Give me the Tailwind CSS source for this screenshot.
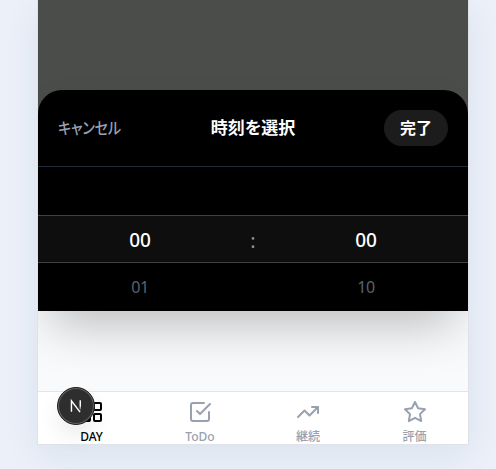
<!DOCTYPE html>
<html lang="ja">
<head>
<meta charset="utf-8">
<title>時刻を選択</title>
<script src="https://cdn.jsdelivr.net/npm/@tailwindcss/browser@4"></script>
</head>
<body class="h-[469px] overflow-hidden bg-[#ebf0f9] font-['Noto_Sans','Noto_Sans_CJK_JP',sans-serif]">
<div class="relative mx-auto ml-[37px] flex h-[445px] w-[432px] flex-col border-x border-b border-[#dfe3e8] bg-[#f9fafb] shadow-[0_10px_35px_rgba(30,50,90,0.07)]">
  <main class="relative h-[391px] shrink-0 overflow-hidden">
    <div class="h-[90px] bg-[#4b4d4b]"></div>
    <div class="h-[30px] bg-[#4b4d4b]"></div>
    <section class="relative -mt-[30px] h-[221px] rounded-t-3xl bg-black shadow-[0_25px_50px_-12px_rgba(0,0,0,0.25)]">
      <header class="flex h-[77px] items-center justify-between border-b border-[#1e2939] px-5">
        <button class="w-16 origin-left scale-x-[0.88] text-left text-base leading-6 font-medium whitespace-nowrap text-[#99a1af] [font-feature-settings:'palt'] tracking-[-0.2px]">キャンセル</button>
        <h1 class="text-[17px] leading-6 font-bold whitespace-nowrap text-white [font-feature-settings:'palt']">時刻を選択</h1>
        <button class="h-9 w-16 rounded-full bg-[#1c1c1c] text-base leading-9 font-bold text-white">完了</button>
      </header>
      <div class="h-12"></div>
      <div class="flex h-12 items-center border-y border-[#424242] bg-[#0e0e0e] text-[19px] font-medium text-white">
        <span class="w-[204px] pt-0.5 text-center">00</span>
        <span class="w-[22px] pt-1 text-center text-xl font-normal text-[#8a919d]">:</span>
        <span class="w-[204px] pt-0.5 text-center">00</span>
      </div>
      <div class="flex h-12 items-center justify-between text-base tracking-[-0.4px] text-[#5b6270]">
        <span class="w-[204px] text-center">01</span>
        <span class="w-[204px] text-center">10</span>
      </div>
    </section>
  </main>
  <nav class="flex h-[53px] border-t border-[#e5e5e5] bg-white text-xs text-[#99a1af]">
    <a class="flex w-[107px] flex-col items-center pt-2 text-black">
      <svg class="size-6 shrink-0" viewBox="0 0 24 24" fill="none" stroke="currentColor" stroke-width="2"><rect x="3" y="3" width="7" height="7" rx="1"/><rect x="14" y="3" width="7" height="7" rx="1"/><rect x="3" y="14" width="7" height="7" rx="1"/><rect x="14" y="14" width="7" height="7" rx="1"/></svg>
      <span class="mt-[5px] leading-4 font-medium">DAY</span>
    </a>
    <a class="flex w-[110px] flex-col items-center pt-2">
      <svg class="size-6 shrink-0" viewBox="0 0 24 24" fill="none" stroke="currentColor" stroke-width="2" stroke-linecap="round" stroke-linejoin="round"><path d="m9 11 3 3L22 4"/><path d="M21 12v7a2 2 0 0 1-2 2H5a2 2 0 0 1-2-2V5a2 2 0 0 1 2-2h11"/></svg>
      <span class="mt-[5px] leading-4 font-medium">ToDo</span>
    </a>
    <a class="flex w-[106px] flex-col items-center pt-2">
      <svg class="size-6 shrink-0" viewBox="0 0 24 24" fill="none" stroke="currentColor" stroke-width="2" stroke-linecap="round" stroke-linejoin="round"><path d="M2 17 8.5 10.5l5 5L22 7"/><path d="M16 7h6v6"/></svg>
      <span class="mt-[5px] leading-4 font-medium">継続</span>
    </a>
    <a class="flex w-[107px] flex-col items-center pt-2">
      <svg class="size-6 shrink-0" viewBox="0 0 24 24" fill="none" stroke="currentColor" stroke-width="2" stroke-linecap="round" stroke-linejoin="round"><path d="m12 2 3.09 6.26L22 9.27l-5 4.87 1.18 6.88L12 17.77l-6.18 3.25L7 14.14 2 9.27l6.91-1.01z"/></svg>
      <span class="mt-[5px] leading-4 font-medium">評価</span>
    </a>
  </nav>
  <div class="absolute top-[387px] left-[19px] flex size-[38px] items-center justify-center rounded-full border border-[#202020] bg-[#2e2e2e] shadow-[inset_0_0_0_1px_#666,0_12px_24px_-4px_rgba(0,0,0,0.12)]">
    <svg class="size-[38px]" viewBox="0 0 38 38" fill="none" stroke-width="1.5">
      <defs><linearGradient id="fade" x1="0" y1="13" x2="0" y2="24" gradientUnits="userSpaceOnUse"><stop offset=".5" stop-color="#fff"/><stop offset="1" stop-color="#fff" stop-opacity="0"/></linearGradient></defs>
      <path d="M14.2 25V13.6L23.3 25.5" stroke="#fff"/><path d="M23.5 13v11" stroke="url(#fade)"/>
    </svg>
  </div>
</div>
</body>
</html>
